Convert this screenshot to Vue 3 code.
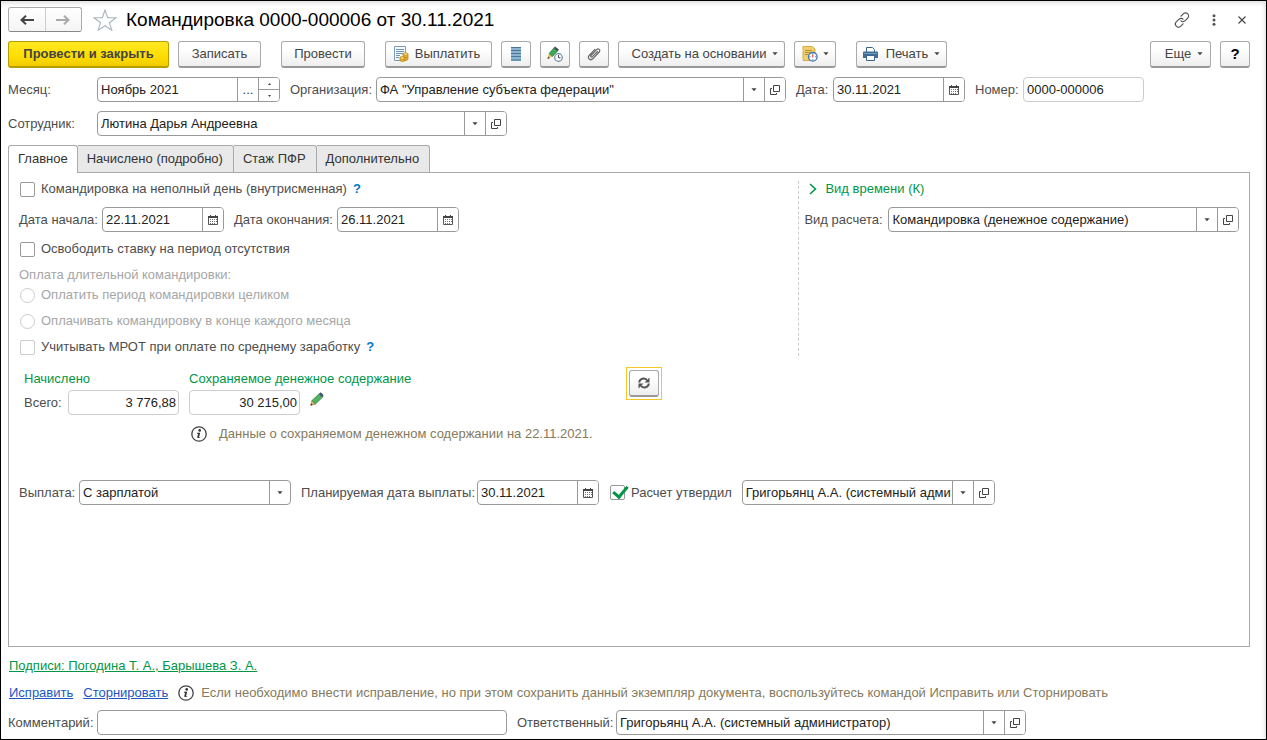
<script setup>
import { ref } from 'vue'

const tabs = ['Главное', 'Начислено (подробно)', 'Стаж ПФР', 'Дополнительно']
const activeTab = ref(0)

const month = ref('Ноябрь 2021')
const docDate = ref('30.11.2021')
const docNumber = ref('0000-000006')
const dateFrom = ref('22.11.2021')
const dateTo = ref('26.11.2021')
const payDate = ref('30.11.2021')
const comment = ref('')
const partialDay = ref(false)
const freeRate = ref(false)
const useMrot = ref(false)
const approved = ref(true)
</script>

<template>
  <div class="window">
    <svg class="sprite" aria-hidden="true">
      <symbol id="i-down" viewBox="0 0 7 4"><path d="M0.5 0h6L3.5 3.6z" fill="#444" /></symbol>
      <symbol id="i-open" viewBox="0 0 10 10">
        <path d="M3.5 0.5h6v6h-6zM2 3.500H0.500v6h6V8" fill="none" stroke="#444" />
      </symbol>
      <symbol id="i-cal" viewBox="0 0 10 10">
        <path d="M0.500 1.500h9v8h-9z" fill="#fff" stroke="#555" />
        <path d="M0 1h10v2H0zM2 0h1v1H2zM7 0h1v1H7z" fill="#444" />
        <path d="M2 4h1v1H2zM4 4h1v1H4zM6 4h1v1H6zM8 4h1v1H8zM2 6h1v1H2zM4 6h1v1H4zM6 6h1v1H6zM8 6h1v1H8zM2 8h1v1H2zM4 8h1v1H4zM6 8h1v1H6z" fill="#777" />
      </symbol>
      <symbol id="i-info" viewBox="0 0 16 16">
        <circle cx="8" cy="8" r="7.200" fill="#fff" stroke="#444" stroke-width="1.300" />
        <circle cx="8.700" cy="4.400" r="1.300" fill="#333" />
        <path d="M6 6.700h3.200L8.100 11c0 .5.700.3 1.500-.2-.7 1.300-3.600 2-3.300.2l.8-3.300H6z" fill="#333" />
      </symbol>
      <symbol id="i-pencil" viewBox="0 0 14 14">
        <path d="M0.600 13.400L2 8.600l3.500 3.500z" fill="#f0b860" stroke="#8a6a3a" stroke-width=".6" />
        <path d="M0.600 13.400l.6-2 1.400 1.400z" fill="#333" />
        <path d="M2 8.600L8.800 2l3.400 3.500-6.700 6.600z" fill="#4fb35f" stroke="#2f8040" stroke-width=".7" />
        <path d="M8.800 2L10.300.6c.6-.6 3.700 2.500 3.100 3.100L12.200 5.500z" fill="#44546a" />
      </symbol>
    </svg>

    <header class="titlebar">
      <div class="nav">
        <button type="button" aria-label="Назад">
          <svg width="14" height="10" viewBox="0 0 14 10"><path d="M14 5H2M6 .8L1.500 5 6 9.200" fill="none" stroke="#444" stroke-width="2" /></svg>
        </button>
        <button type="button" aria-label="Вперед">
          <svg width="14" height="10" viewBox="0 0 14 10"><path d="M0 5h12M8 .8L12.500 5 8 9.200" fill="none" stroke="#aaa" stroke-width="2" /></svg>
        </button>
      </div>
      <button type="button" class="bare star" aria-label="В избранное">
        <svg width="24" height="22" viewBox="0 0 24 22"><path d="M12 1l2.700 7.600 8.300.1-6.600 5 2.400 7.500L12 16.700l-6.800 4.500 2.400-7.500L1 8.700l8.300-.1z" fill="#fff" stroke="#a9b4bd" stroke-width="1.100" /></svg>
      </button>
      <h1>Командировка 0000-000006 от 30.11.2021</h1>
      <div class="window-tools">
        <button type="button" class="bare" aria-label="Получить ссылку">
          <svg width="16" height="16" viewBox="0 0 16 16" fill="none" stroke="#555" stroke-width="1.200" stroke-linecap="round"><path d="M7 4.200l2.200-2.300c1.400-1.400 3.300-1.300 4.500-.1s1.300 3 0 4.300L11.200 8.700c-1.300 1.300-3.200 1.200-4.200.1M9 11.800l-2.200 2.300c-1.400 1.400-3.300 1.300-4.500.1s-1.300-3 0-4.300l2.500-2.600c1.300-1.300 3.200-1.200 4.200-.1" /></svg>
        </button>
        <button type="button" class="bare" aria-label="Дополнительно">
          <svg width="4" height="12" viewBox="0 0 4 12" fill="#555"><circle cx="2" cy="1.700" r="1.500" /><circle cx="2" cy="6" r="1.500" /><circle cx="2" cy="10.300" r="1.500" /></svg>
        </button>
        <button type="button" class="bare" aria-label="Закрыть">
          <svg width="8" height="8" viewBox="0 0 8 8"><path d="M.5.5l7 7M7.500.5l-7 7" stroke="#444" stroke-width="1.100" /></svg>
        </button>
      </div>
    </header>

    <div class="toolbar">
      <button type="button" class="btn primary w161">Провести и закрыть</button>
      <button type="button" class="btn w83">Записать</button>
      <button type="button" class="btn w84 apart">Провести</button>
      <button type="button" class="btn pay w107 apart">
        <svg width="16" height="16" viewBox="0 0 16 16">
          <path d="M1.500.5h11v14h-11z" fill="#f4f8fb" stroke="#7f9db5" />
          <path d="M3 3.500h8M3 5.500h8M3 7.500h8M3 9.500h4M3 11.500h3" stroke="#6f93b0" />
          <path d="M7 11v3c0 2 5 2 5 0v-3zM10 8v5c0 2 5 2 5 0V8z" fill="#e9b52c" stroke="#b98313" stroke-width=".7" />
          <ellipse cx="12.500" cy="8" rx="2.500" ry="1.200" fill="#ffe082" stroke="#b98313" stroke-width=".7" />
          <ellipse cx="9.500" cy="12" rx="2.500" ry="1.200" fill="#ffe082" stroke="#b98313" stroke-width=".7" />
          <path d="M10.500 11c1 .8 3.500.8 4.500 0" fill="none" stroke="#b98313" stroke-width=".7" />
        </svg>
        Выплатить
      </button>
      <button type="button" class="btn square" aria-label="Список">
        <svg width="10" height="14" viewBox="0 0 10 14"><path d="M0 0h10v14H0z" fill="#8db3cd" /><path d="M0 .5h10M0 3.500h10M0 6.500h10M0 9.500h10M0 13h10" stroke="#47789b" /></svg>
      </button>
      <button type="button" class="btn square" aria-label="Изменить дату">
        <svg width="16" height="16" viewBox="0 0 16 16">
          <path d="M.5 13L2 7.500 5.500 10.500z" fill="#f0b860" /><path d="M.5 13l.6-2.300 1.700 1.300z" fill="#333" />
          <path d="M2 7.500L6.700 2l3.800 3.200-5 5.300z" fill="#3fa653" stroke="#2b7c3b" stroke-width=".6" />
          <path d="M6.700 2L8.100.5l3.900 3.200-1.500 1.500z" fill="#3e4855" />
          <circle cx="11.500" cy="11.500" r="3.800" fill="#fff" stroke="#6688a0" stroke-width="1.200" />
          <path d="M11.500 9v2.800h2" fill="none" stroke="#445" />
        </svg>
      </button>
      <button type="button" class="btn square" aria-label="Присоединенные файлы">
        <svg width="14" height="14" viewBox="0 0 14 14"><path d="M10.500 4.500L5.200 9.800c-.9.900-2.200-.3-1.300-1.300l5.700-5.900c1.800-1.700 4.300.4 2.600 2.400l-6.400 6.800c-2.500 2.400-5.900-.8-3.600-3.400l5.700-6" fill="none" stroke="#666" stroke-width="1.200" stroke-linecap="round" /></svg>
      </button>
      <button type="button" class="btn menu w167">Создать на основании <svg class="caret"><use href="#i-down" /></svg></button>
      <button type="button" class="btn w42" aria-label="Задачи">
        <svg width="16" height="16" viewBox="0 0 16 16">
          <path d="M1 .5h9.500L13 3v11.500H1c1.200-1.400-1-2.600 0-4V6c1-1.500-1-3.500 0-5.500z" fill="#f3cf69" stroke="#c99b31" stroke-width=".8" />
          <path d="M3 4.500h7M3 6.500h5M3 8.500h3" stroke="#b98c2e" />
          <circle cx="10.800" cy="10.800" r="4.300" fill="#fff" stroke="#3f79ad" stroke-width="1.300" />
          <path d="M10.800 7.300v1.200M10.800 13.200v1.200M7.300 10.800h1.200M13.200 10.800h1.200" stroke="#3f79ad" /><path d="M10.800 8.500v3" stroke="#d33" />
        </svg>
        <svg class="caret"><use href="#i-down" /></svg>
      </button>
      <button type="button" class="btn w91 apart">
        <svg width="15" height="14" viewBox="0 0 15 14">
          <path d="M3.500 5V.5h6l2 2V5" fill="#fff" stroke="#3b6689" /><path d="M1 4.500h13c.6 0 1 .5 1 1V11H0V5.500c0-.6.500-1 1-1z" fill="#3f6f96" />
          <path d="M1 6.500h13" stroke="#6f9cbd" /><path d="M3.500 8.500h8v5h-8z" fill="#fff" stroke="#3b6689" />
        </svg>
        Печать <svg class="caret"><use href="#i-down" /></svg>
      </button>
      <span class="spacer"></span>
      <button type="button" class="btn menu w61">Еще <svg class="caret"><use href="#i-down" /></svg></button>
      <button type="button" class="btn square help">?</button>
    </div>

    <div class="row">
      <label class="lead" for="month">Месяц:</label>
      <div class="field w183">
        <input id="month" v-model="month" type="text">
        <button type="button" aria-label="Выбрать месяц">...</button>
        <div class="spin">
          <button type="button" aria-label="Больше"><svg width="3" height="2"><path d="M0 2h3L1.500 0z" fill="#444" /></svg></button>
          <button type="button" aria-label="Меньше"><svg width="3" height="2"><path d="M0 0h3L1.500 2z" fill="#444" /></svg></button>
        </div>
      </div>
      <label class="l86" for="org">Организация:</label>
      <div class="field w410">
        <div class="pick"><select id="org"><option>ФА "Управление субъекта федерации"</option></select><svg class="mark"><use href="#i-down" /></svg></div>
        <button type="button" aria-label="Открыть организацию"><svg class="ico"><use href="#i-open" /></svg></button>
      </div>
      <label class="l37" for="date">Дата:</label>
      <div class="field w132">
        <input id="date" v-model="docDate" type="text">
        <button type="button" aria-label="Календарь"><svg class="ico"><use href="#i-cal" /></svg></button>
      </div>
      <label class="l48" for="num">Номер:</label>
      <div class="field soft w121"><input id="num" v-model="docNumber" type="text"></div>
    </div>

    <div class="row">
      <label class="lead" for="emp">Сотрудник:</label>
      <div class="field w410">
        <div class="pick"><select id="emp"><option>Лютина Дарья Андреевна</option></select><svg class="mark"><use href="#i-down" /></svg></div>
        <button type="button" aria-label="Открыть сотрудника"><svg class="ico"><use href="#i-open" /></svg></button>
      </div>
    </div>

    <div class="tabs" role="tablist">
      <button
        v-for="(tab, i) in tabs" :key="tab" type="button" role="tab"
        :class="{ active: i === activeTab }" :aria-selected="i === activeTab" @click="activeTab = i"
      >{{ tab }}</button>
    </div>

    <main class="panel">
      <div class="columns">
        <section class="main-col">
          <div class="line h16">
            <label class="check"><input v-model="partialDay" type="checkbox">Командировка на неполный день (внутрисменная)</label>
            <a href="#" class="hint">?</a>
          </div>
          <div class="row dates">
            <label class="l83" for="from">Дата начала:</label>
            <div class="field w122">
              <input id="from" v-model="dateFrom" type="text">
              <button type="button" aria-label="Календарь"><svg class="ico"><use href="#i-cal" /></svg></button>
            </div>
            <label class="l103" for="to">Дата окончания:</label>
            <div class="field w122">
              <input id="to" v-model="dateTo" type="text">
              <button type="button" aria-label="Календарь"><svg class="ico"><use href="#i-cal" /></svg></button>
            </div>
          </div>
          <div class="line h16">
            <label class="check"><input v-model="freeRate" type="checkbox">Освободить ставку на период отсутствия</label>
          </div>
          <fieldset disabled>
            <legend>Оплата длительной командировки:</legend>
            <label class="check"><input type="radio" name="longtrip">Оплатить период командировки целиком</label>
            <label class="check"><input type="radio" name="longtrip">Оплачивать командировку в конце каждого месяца</label>
          </fieldset>
          <div class="line h16">
            <label class="check pale"><input v-model="useMrot" type="checkbox">Учитывать МРОТ при оплате по среднему заработку</label>
            <a href="#" class="hint">?</a>
          </div>
        </section>
        <section class="side-col">
          <a href="#" class="expand">
            <svg width="8" height="12" viewBox="0 0 8 12"><path d="M1 1l5.500 5L1 11" fill="none" stroke="#009646" stroke-width="1.600" /></svg>
            Вид времени (К)
          </a>
          <div class="row">
            <label class="l84" for="kind">Вид расчета:</label>
            <div class="field grow">
              <div class="pick"><select id="kind"><option>Командировка (денежное содержание)</option></select><svg class="mark"><use href="#i-down" /></svg></div>
              <button type="button" aria-label="Открыть вид расчета"><svg class="ico"><use href="#i-open" /></svg></button>
            </div>
          </div>
        </section>
      </div>

      <div class="accrual">
        <h2>Начислено</h2>
        <h2>Сохраняемое денежное содержание</h2>
        <div class="refresh"><button type="button" class="btn" aria-label="Пересчитать">
          <svg width="12" height="12" viewBox="0 0 12 12"><path d="M1.200 5.500C1.500 1.500 6.500.2 9 3.200M10.800 6.500C10.500 10.500 5.500 11.800 3 8.800" fill="none" stroke="#555" stroke-width="2" /><path d="M11.500.5v5h-5zM.5 11.500v-5h5z" fill="#555" /></svg>
        </button></div>
        <div class="row">
          <label class="l44" for="total">Всего:</label>
          <div class="field soft sum w111"><input id="total" type="text" value="3 776,88" readonly></div>
        </div>
        <div class="row">
          <div class="field soft sum w111"><input type="text" value="30 215,00" aria-label="Сохраняемое денежное содержание" readonly></div>
          <button type="button" class="bare edit" aria-label="Изменить"><svg width="14" height="14"><use href="#i-pencil" /></svg></button>
        </div>
        <p class="note"><svg width="16" height="16"><use href="#i-info" /></svg>Данные о сохраняемом денежном содержании на 22.11.2021.</p>
      </div>

      <div class="row payment">
        <label class="l60" for="pay">Выплата:</label>
        <div class="field w212">
          <div class="pick"><select id="pay"><option>С зарплатой</option></select><svg class="mark"><use href="#i-down" /></svg></div>
        </div>
        <label class="l176" for="paydate">Планируемая дата выплаты:</label>
        <div class="field w122">
          <input id="paydate" v-model="payDate" type="text">
          <button type="button" aria-label="Календарь"><svg class="ico"><use href="#i-cal" /></svg></button>
        </div>
        <label class="check approve"><input v-model="approved" type="checkbox">Расчет утвердил</label>
        <div class="field w253">
          <div class="pick"><select aria-label="Расчет утвердил"><option>Григорьянц А.А. (системный администратор)</option></select><svg class="mark"><use href="#i-down" /></svg></div>
          <button type="button" aria-label="Открыть пользователя"><svg class="ico"><use href="#i-open" /></svg></button>
        </div>
      </div>
    </main>

    <footer>
      <a href="#" class="signs">Подписи: Погодина Т. А., Барышева З. А.</a>
      <div class="fixes">
        <a href="#">Исправить</a>
        <a href="#">Сторнировать</a>
        <p class="note tight"><svg width="16" height="16"><use href="#i-info" /></svg>Если необходимо внести исправление, но при этом сохранить данный экземпляр документа, воспользуйтесь командой Исправить или Сторнировать</p>
      </div>
      <div class="row">
        <label class="lead" for="comment">Комментарий:</label>
        <div class="field w410"><input id="comment" v-model="comment" type="text"></div>
        <label class="l99" for="resp">Ответственный:</label>
        <div class="field w410">
          <div class="pick"><select id="resp"><option>Григорьянц А.А. (системный администратор)</option></select><svg class="mark"><use href="#i-down" /></svg></div>
          <button type="button" aria-label="Открыть ответственного"><svg class="ico"><use href="#i-open" /></svg></button>
        </div>
      </div>
    </footer>
  </div>
</template>

<style>
body { background: #fff; }
</style>

<style scoped>
* { box-sizing: border-box; }
.window {
  min-height: 100vh;
  display: flex;
  flex-direction: column;
  padding: 6px 16px 4px 7px;
  border: 1px solid #000;
  box-shadow: inset 0 5px 5px -3px #ddd, inset -4px 0 4px -3px #ddd;
  background: #fff;
  color: #4d4d4d;
  font: 13px/16px "Liberation Sans", Arial, sans-serif;
}
.sprite { position: absolute; width: 0; height: 0; }
button, input, select { font: inherit; color: inherit; margin: 0; }
button { padding: 0; cursor: pointer; }
svg { flex: none; display: block; }
h1, h2, p { margin: 0; font-weight: normal; }
.bare { border: 0; background: none; display: flex; }

.titlebar { display: flex; align-items: center; height: 25px; }
.nav { display: flex; width: 74px; height: 25px; border: 1px solid #aaa; border-bottom-color: #888; border-radius: 3px; }
.nav button { flex: 1; display: flex; align-items: center; justify-content: center; border: 0; background: linear-gradient(#fff, #f4f4f4); border-radius: 3px; }
.nav button + button { border-left: 1px solid #ccc; border-radius: 0 3px 3px 0; }
.star { margin: 0 9px 0 11px; }
h1 { font-size: 19px; line-height: 24px; color: #000; }
.window-tools { display: flex; align-items: center; gap: 22px; margin-left: auto; padding-right: 4px; }

.toolbar { display: flex; gap: 9px; margin-top: 9px; }
.btn {
  display: flex; align-items: center; justify-content: center; gap: 8px; height: 27px;
  border: 1px solid #aaa; border-bottom: 2px solid #999; border-radius: 3px;
  background: linear-gradient(#fff 30%, #eee); color: #444; white-space: nowrap;
}
.btn.primary { background: linear-gradient(#ffe924, #ffdd00 60%, #f0cc00); border-color: #b79d00; font-weight: bold; }
.btn.menu { padding-left: 7px; }
.btn.pay { gap: 6px; padding-right: 4px; }
.apart { margin-left: 11px; }
.square { width: 30px; }
.help { font-weight: bold; font-size: 15px; color: #000; }
.spacer { flex: 1; }
.caret { width: 6px; height: 4px; margin-left: -2px; }
.btn.w42 { gap: 7px; }

.row { display: flex; align-items: center; margin-top: 9px; }
.row > .field + label { margin-left: 10px; }
.row label { white-space: nowrap; }
.lead { width: 89px; }
.field { display: flex; height: 25px; border: 1px solid #999; border-radius: 4px; background: #fff; color: #333; overflow: hidden; }
.field.soft { border-color: #ccc; }
.field input { flex: 1; min-width: 0; width: 0; border: 0; padding: 0 3px; background: none; outline: 0; color: #222; }
.field.sum input { text-align: right; padding-right: 2px; }
.field button { width: 21px; border: 0; border-left: 1px solid #999; background: #fff; display: flex; align-items: center; justify-content: center; }
.spin { display: flex; flex-direction: column; width: 21px; border-left: 1px solid #999; }
.spin button { flex: 1; width: 20px; border-left: 0; }
.spin button + button { border-top: 1px solid #999; }
.pick { position: relative; flex: 1; min-width: 0; display: flex; }
.pick select { appearance: none; width: 100%; border: 0; background: none; padding: 0 22px 0 3px; outline: 0; color: #222; }
.pick::after { content: ""; position: absolute; top: 0; bottom: 0; right: 20px; border-left: 1px solid #999; }
.mark { position: absolute; right: 7px; top: 10px; width: 6px; height: 4px; pointer-events: none; }
.ico { width: 10px; height: 10px; }
.grow { flex: 1; }

.tabs { display: flex; margin-top: 9px; height: 27px; }
.tabs button { padding: 0 10px 0 9px; border: 1px solid #aaa; border-bottom: 0; border-left: 0; border-radius: 0 3px 0 0; background: #e9e9e9; color: #333; }
.tabs button:first-child { padding-right: 9px; border-left: 1px solid #aaa; border-radius: 3px 3px 0 0; }
.tabs .active { position: relative; height: 28px; padding-bottom: 1px; background: #fff; }

.panel { flex: 1; border: 1px solid #aaa; padding: 8px 10px; }
.columns { display: grid; grid-template-columns: 23fr 13fr; }
.line { display: flex; align-items: center; gap: 6px; }
.h16 { height: 16px; }
.check { display: flex; align-items: center; gap: 6px; white-space: nowrap; }
.check input { appearance: none; position: relative; width: 15px; height: 15px; margin-left: 1px; border: 1px solid #999; border-radius: 2px; background: #fff; }
.check input[type=radio] { border-radius: 50%; border-color: #ccc; }
.check.pale input { border-color: #ccc; }
.check input:checked::after { content: ""; position: absolute; left: 5px; top: -3px; width: 6px; height: 12px; border: solid #009646; border-width: 0 3px 3px 0; transform: rotate(40deg); }
.hint { color: #0077c8; font-weight: bold; text-decoration: none; }
.dates { margin: 10px 0 9px; }
fieldset { border: 0; margin: 10px 0 0; padding: 0; color: #a6a6a6; min-width: 0; }
legend { padding: 0; }
fieldset .check { height: 16px; margin-top: 4px; }
fieldset .check + .check { margin: 10px 0; }
.side-col { border-left: 1px dashed #ccc; padding-left: 5px; height: 175px; }
.expand { display: flex; align-items: center; gap: 8px; height: 16px; padding-left: 5px; color: #009646; text-decoration: none; }
.side-col .row { margin-top: 10px; }

.accrual { display: grid; grid-template-columns: 165px 437px auto; padding-left: 5px; margin-top: 11px; justify-content: start; }
h2 { font-size: 13px; line-height: 16px; padding-top: 4px; color: #009646; }
.accrual .row { margin-top: 3px; }
.refresh { grid-column: 3; grid-row: 1 / 3; width: 36px; height: 33px; padding: 2px; border: 1px solid #f5c828; }
.refresh .btn { width: 30px; height: 27px; }
.edit { margin-left: 10px; padding-bottom: 8px; }
.note { display: flex; align-items: center; gap: 12px; color: #857a5c; white-space: nowrap; }
.accrual .note { grid-column: 2; padding: 11px 0 0 2px; }
.note.tight { gap: 7px; }
.payment { margin-top: 38px; }
.approve { margin: 0 10px; }

footer .signs { display: inline-block; margin: 11px 0 0 1px; color: #009646; }
.fixes { display: flex; align-items: center; gap: 10px; margin: 11px 0 0 1px; }
.fixes a { color: #1a56c4; }

.l37 { width: 37px; } .l44 { width: 44px; } .l48 { width: 48px; } .l60 { width: 60px; }
.l83 { width: 83px; } .l84 { width: 84px; } .l86 { width: 86px; } .l99 { width: 99px; }
.l103 { width: 103px; } .l176 { width: 176px; }
.w42 { width: 42px; } .w61 { width: 61px; } .w83 { width: 83px; } .w84 { width: 84px; }
.w91 { width: 91px; } .w107 { width: 107px; } .w111 { width: 111px; } .w121 { width: 121px; }
.w122 { width: 122px; } .w132 { width: 132px; } .w161 { width: 161px; } .w167 { width: 167px; }
.w183 { width: 183px; } .w212 { width: 212px; } .w253 { width: 253px; } .w410 { width: 410px; }
</style>
